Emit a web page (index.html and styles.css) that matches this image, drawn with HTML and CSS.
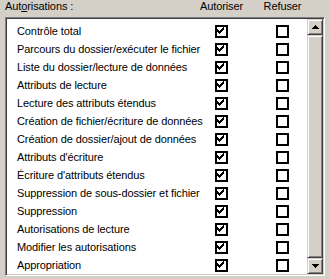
FILE: index.html
```html
<!DOCTYPE html>
<html>
<head lang="fr">
    <meta charset="UTF-8">
    <title>Autorisations</title>
    <link rel="stylesheet" href="styles.css">
</head>
<body>
<div id="panel">
    <div class="head">
        <span class="head-label">Aut<u>o</u>risations :</span>
        <span class="head-col">Autoriser</span>
        <span class="head-col">Refuser</span>
    </div>
    <div id="list">
        <div id="rows">
            <div class="row"><span class="label">Contrôle total</span><span class="cb allow on"></span><span class="cb deny"></span></div>
            <div class="row"><span class="label">Parcours du dossier/exécuter le fichier</span><span class="cb allow on"></span><span class="cb deny"></span></div>
            <div class="row"><span class="label">Liste du dossier/lecture de données</span><span class="cb allow on"></span><span class="cb deny"></span></div>
            <div class="row"><span class="label">Attributs de lecture</span><span class="cb allow on"></span><span class="cb deny"></span></div>
            <div class="row"><span class="label">Lecture des attributs étendus</span><span class="cb allow on"></span><span class="cb deny"></span></div>
            <div class="row"><span class="label">Création de fichier/écriture de données</span><span class="cb allow on"></span><span class="cb deny"></span></div>
            <div class="row"><span class="label">Création de dossier/ajout de données</span><span class="cb allow on"></span><span class="cb deny"></span></div>
            <div class="row"><span class="label">Attributs d'écriture</span><span class="cb allow on"></span><span class="cb deny"></span></div>
            <div class="row"><span class="label">Écriture d'attributs étendus</span><span class="cb allow on"></span><span class="cb deny"></span></div>
            <div class="row"><span class="label">Suppression de sous-dossier et fichier</span><span class="cb allow on"></span><span class="cb deny"></span></div>
            <div class="row"><span class="label">Suppression</span><span class="cb allow on"></span><span class="cb deny"></span></div>
            <div class="row"><span class="label">Autorisations de lecture</span><span class="cb allow on"></span><span class="cb deny"></span></div>
            <div class="row"><span class="label">Modifier les autorisations</span><span class="cb allow on"></span><span class="cb deny"></span></div>
            <div class="row"><span class="label">Appropriation</span><span class="cb allow on"></span><span class="cb deny"></span></div>
        </div>
        <div id="scroll">
            <div class="sbtn"><svg width="7" height="4" viewBox="0 0 7 4"><path d="M3 0h1v1h1v1h1v1h1v1H0V3h1V2h1V1h1z"/></svg></div>
            <div class="thumb"></div>
            <div class="sbtn"><svg width="7" height="4" viewBox="0 0 7 4"><path d="M0 0h7v1H6v1H5v1H4v1H3V3H2V2H1V1H0z"/></svg></div>
        </div>
    </div>
</div>
<script>
    var aOn = document.querySelectorAll(".cb.on");
    for(var i=0; i<aOn.length; i++){
        aOn[i].innerHTML = '<svg width="9" height="9" viewBox="0 0 9 9"><path d="M1 3h1v3H1zM2 4h1v3H2zM3 5h1v3H3zM4 4h1v3H4zM5 3h1v3H5zM6 2h1v3H6zM7 1h1v3H7z"/></svg>';
    }
</script>
</body>
</html>
```

FILE: styles.css
```css
*{
    margin: 0;
    padding: 0;
    box-sizing: border-box;
}
body{
    background: #d4d0c8;
    font-family: "Liberation Sans", Arial, sans-serif;
    font-size: 11px;
    letter-spacing: -0.1px;
    color: #000;
}
#panel{
    width: 329px;
    height: 279px;
    padding: 0 4px 0 5px;
}
.head{
    display: flex;
    height: 17px;
    line-height: 13px;
}
.head-label{
    width: 186px;
}
.head-col{
    width: 61px;
    text-align: center;
}
#list{
    display: flex;
    height: 259px;
    border: 1px solid;
    border-color: #808080 #fff #fff #808080;
    box-shadow: inset 1px 1px 0 #404040, inset -1px -1px 0 #d4d0c8;
    padding: 1px;
}
#rows{
    flex: 1;
    background: #fff;
    padding-top: 3px;
    overflow: hidden;
}
.row{
    display: flex;
    align-items: center;
    height: 18px;
}
.label{
    width: 197px;
    padding-left: 10px;
    white-space: nowrap;
    overflow: hidden;
    text-overflow: ellipsis;
}
.cb{
    width: 13px;
    height: 13px;
    border: 2px solid #000;
    background: #fff;
    display: block;
}
.cb svg{
    display: block;
    margin: -1px;
}
.cb.allow{
    margin-left: 11px;
}
.cb.deny{
    margin-left: 48px;
}
#scroll{
    width: 16px;
    display: flex;
    flex-direction: column;
}
.sbtn, .thumb{
    background: #d4d0c8;
    border: 1px solid;
    border-color: #d4d0c8 #404040 #404040 #d4d0c8;
    box-shadow: inset 1px 1px 0 #fff, inset -1px -1px 0 #808080;
}
.sbtn{
    height: 16px;
    display: flex;
    align-items: center;
    justify-content: center;
}
.thumb{
    flex: 1;
}
```
